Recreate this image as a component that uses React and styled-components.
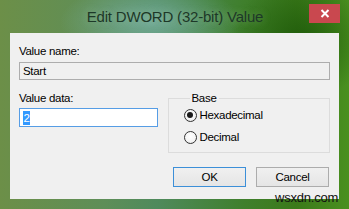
import React from "react";
import styled, { createGlobalStyle } from "styled-components";

const GlobalStyle = createGlobalStyle`
  html, body {
    margin: 0;
    padding: 0;
    background: #ffffff;
  }
  * {
    box-sizing: border-box;
  }
`;

const Window = styled.div`
  position: relative;
  width: 349px;
  height: 209px;
  display: flex;
  flex-direction: column;
  overflow: hidden;
  font-family: "Liberation Sans", Arial, sans-serif;
  background:
    radial-gradient(ellipse 90px 40px at 150px 22px, rgba(120, 175, 160, 0.85), rgba(120, 175, 160, 0) 100%),
    radial-gradient(ellipse 70px 60px at 300px 40px, rgba(30, 90, 10, 0.9), rgba(30, 90, 10, 0) 100%),
    linear-gradient(90deg, #6c8f48 0%, #5e8e58 30%, #4f8a5c 45%, #3f7f2c 70%, #3b7a1a 85%, #4a9020 100%);
`;

const TitleBar = styled.div`
  height: 33px;
  display: grid;
  grid-template-columns: 1fr auto 1fr;
  align-items: start;
  padding: 0 9px 0 10px;
`;

const Title = styled.div`
  grid-column: 2;
  margin-top: 8px;
  font-size: 15px;
  letter-spacing: -0.2px;
  color: #1d3828;
  white-space: nowrap;
  text-shadow: 0 0 8px rgba(200, 230, 200, 0.35);
`;

const CloseButton = styled.div`
  grid-column: 3;
  justify-self: end;
  margin-top: 4px;
  width: 31px;
  height: 19px;
  background: #c9484f;
  display: flex;
  align-items: center;
  justify-content: center;
`;

const Client = styled.div`
  margin: 0 10px;
  height: 166px;
  background: #f0f0f0;
  padding: 11px 9px 0 9px;
  display: flex;
  flex-direction: column;
  font-size: 11.5px;
  letter-spacing: -0.3px;
  color: #000;
`;

const Label = styled.div`
  line-height: 14px;
  height: 14px;
`;

const NameBox = styled.div`
  margin-top: 4px;
  height: 18px;
  border: 1px solid #adadad;
  background: #f0f0f0;
  padding: 0 0 0 3px;
  line-height: 16px;
`;

const DataRow = styled.div`
  margin-top: 11px;
  display: flex;
  gap: 10px;
  align-items: flex-start;
`;

const DataColumn = styled.div`
  width: 139px;
  display: flex;
  flex-direction: column;
`;

const DataBox = styled.div`
  margin-top: 3px;
  height: 19px;
  border: 1px solid #569de5;
  background: #ffffff;
  padding: 0 0 0 3px;
  display: flex;
  align-items: center;
`;

const Selected = styled.span`
  background: #3399ff;
  color: #ffffff;
  line-height: 14px;
  padding: 0 0.5px;
`;

const Group = styled.fieldset`
  margin: 0;
  width: 163px;
  height: 62px;
  border: 1px solid #dcdcdc;
  padding: 0 8px 0 15px;
  display: flex;
  flex-direction: column;
  gap: 6px;
`;

const Legend = styled.legend`
  margin-left: 6px;
  padding: 0 2px;
  line-height: 14px;
`;

const RadioRow = styled.div`
  display: flex;
  align-items: center;
  gap: 3px;
  height: 16px;
  margin-top: ${(p) => (p.$first ? "2px" : "0")};
`;

const RadioCircle = styled.span`
  width: 13px;
  height: 13px;
  border-radius: 50%;
  border: 1px solid #333333;
  background: radial-gradient(circle at 50% 40%, #ffffff 0%, #f4f4f4 60%, #dcdcdc 100%);
  display: flex;
  align-items: center;
  justify-content: center;
  &::after {
    content: "";
    width: 6px;
    height: 6px;
    border-radius: 50%;
    background: #1a1a1a;
    display: ${(p) => (p.$checked ? "block" : "none")};
  }
`;

const ButtonRow = styled.div`
  margin-top: 14px;
  display: flex;
  justify-content: flex-end;
  gap: 10px;
  padding-right: 1px;
`;

const Button = styled.div`
  width: 73px;
  height: 20px;
  border: 1px solid ${(p) => (p.$default ? "#3c8fd8" : "#acacac")};
  background: linear-gradient(#f0f0f0, #e5e5e5);
  display: flex;
  align-items: center;
  justify-content: center;
  font-size: 11.5px;
`;

const Watermark = styled.div`
  position: absolute;
  left: 275px;
  top: 191px;
  font-size: 13px;
  line-height: 13px;
  letter-spacing: -0.2px;
  color: #111;
`;

const App = () => {
  return (
    <>
      <GlobalStyle />
      <Window>
        <TitleBar>
          <Title>Edit DWORD (32-bit) Value</Title>
          <CloseButton>
            <svg width="10" height="9" viewBox="0 0 10 9">
              <path d="M1.5 1 L8.5 8 M8.5 1 L1.5 8" stroke="#ffffff" strokeWidth="2" />
            </svg>
          </CloseButton>
        </TitleBar>
        <Client>
          <Label>Value name:</Label>
          <NameBox>Start</NameBox>
          <DataRow>
            <DataColumn>
              <Label>Value data:</Label>
              <DataBox>
                <Selected>2</Selected>
              </DataBox>
            </DataColumn>
            <Group>
              <Legend>Base</Legend>
              <RadioRow $first>
                <RadioCircle $checked />
                Hexadecimal
              </RadioRow>
              <RadioRow>
                <RadioCircle />
                Decimal
              </RadioRow>
            </Group>
          </DataRow>
          <ButtonRow>
            <Button $default>OK</Button>
            <Button>Cancel</Button>
          </ButtonRow>
        </Client>
        <Watermark>wsxdn.com</Watermark>
      </Window>
    </>
  );
};

export default App;
